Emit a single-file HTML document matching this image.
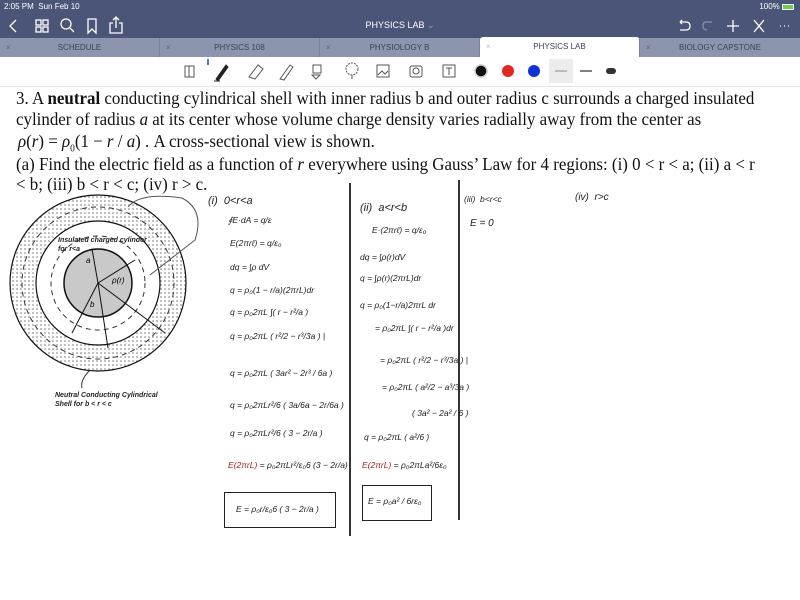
<!DOCTYPE html>
<html><head><meta charset="utf-8"><style>
*{margin:0;padding:0;box-sizing:border-box}
body{width:800px;height:600px;overflow:hidden;background:#fff;font-family:"Liberation Sans",sans-serif;position:relative}
.abs{position:absolute}
.top{background:#4b5578;left:0;top:0;width:800px;height:38px;color:#fff}
.tabs{left:0;top:38px;width:800px;height:19px;background:#8d94ad}
.tab{position:absolute;top:0;height:19px;font-size:8px;color:#3c4358;text-align:center;line-height:19px;border-right:1px solid #7a819a}
.tab .x{position:absolute;left:6px;color:#5a6078}
.tb{left:0;top:57px;width:800px;height:30px;background:#fff;border-bottom:1px solid #e4e4e4}
.q{font-family:"Liberation Serif",serif;font-size:18px;color:#111;white-space:nowrap;transform-origin:0 0;transform:scaleX(0.94)}
.h{font-family:"Liberation Sans",sans-serif;font-style:italic;font-size:8.5px;color:#222;white-space:nowrap}
</style></head><body>
<div class="abs top">
 <div class="abs" style="left:4px;top:2px;font-size:8px">2:05 PM&nbsp; Sun Feb 10</div>
 <div class="abs" style="right:6px;top:2px;font-size:8px">100% <span style="display:inline-block;width:12px;height:6px;background:#6cd04a;border:1px solid #fff;vertical-align:middle"></span></div>
 <svg class="abs" style="left:0;top:14px" width="800" height="24" fill="none" stroke="#fff" stroke-width="1.3">
  <path d="M16 6 L10 12 L16 18"/>
  <rect x="36" y="6" width="5" height="5"/><rect x="43" y="6" width="5" height="5"/><rect x="36" y="13" width="5" height="5"/><rect x="43" y="13" width="5" height="5"/>
  <circle cx="66" cy="10" r="5"/><path d="M70 14 L74 18"/>
  <path d="M88 5 V19 L92 15 L96 19 V5 Z"/>
  <path d="M113 9 H110 V19 H122 V9 H119 M116 14 V3 M113 6 L116 3 L119 6"/>
  <path d="M680 8 H686 Q690 8 690 12 Q690 16 686 16 H680 M680 8 L682 6 M680 8 L682 10"/>
  <path d="M712 8 H706 Q703 8 703 12 Q703 16 707 16" stroke="#8a90a8"/>
  <path d="M733 6 V18 M727 12 H739"/>
  <path d="M754 6 L764 18 M764 6 L754 18"/>
  <path d="M780 12 h1 M784 12 h1 M788 12 h1"/>
 </svg>
 <div class="abs" style="left:0;width:800px;top:20px;text-align:center;font-size:9px">PHYSICS LAB <span style="color:#9aa">⌄</span></div>
</div>
<div class="abs tabs">
 <div class="tab" style="left:0;width:160px"><span class="x">×</span>SCHEDULE</div>
 <div class="tab" style="left:160px;width:160px"><span class="x">×</span>PHYSICS 108</div>
 <div class="tab" style="left:320px;width:160px"><span class="x">×</span>PHYSIOLOGY B</div>
 <div class="tab" style="left:480px;width:160px;background:#fff;top:-1px;height:20px;border-radius:3px 3px 0 0"><span class="x" style="color:#bbb">×</span>PHYSICS LAB</div>
 <div class="tab" style="left:640px;width:160px;border:none"><span class="x">×</span>BIOLOGY CAPSTONE</div>
</div>
<div class="abs tb">
 <svg width="800" height="30" fill="none" stroke="#555" stroke-width="1">
  <rect x="185" y="9" width="9" height="11"/><path d="M189 9 v11"/>
  <path d="M208 2 v6" stroke="#3a7bd5" stroke-width="2"/>
  <path d="M216 22 L226 8 L228 10 L218 24 Z" fill="#222" stroke="#222"/><path d="M214 24 h6" stroke="#222"/>
  <path d="M249 20 L258 8 L263 12 L255 22 Z"/>
  <path d="M280 22 L290 8 L293 10 L284 23 Z"/>
  <path d="M313 8 h8 v8 h-8 z M312 18 l4 4 l4 -4 z"/>
  <circle cx="352" cy="12" r="6" stroke-dasharray="2 1"/><path d="M352 18 v4"/>
  <rect x="377" y="8" width="12" height="12"/><path d="M378 18 l4 -4 l3 3 l3 -3"/>
  <rect x="410" y="9" width="12" height="11" rx="2"/><circle cx="416" cy="14" r="3"/>
  <rect x="443" y="8" width="12" height="12"/><path d="M446 11 h6 M449 11 v7"/>
  <circle cx="481" cy="14" r="6" fill="#111" stroke="#ccc" stroke-width="1.5"/>
  <circle cx="508" cy="14" r="6" fill="#e0281e" stroke="none"/>
  <circle cx="534" cy="14" r="6" fill="#1030d8" stroke="none"/>
  <rect x="549" y="2" width="24" height="24" fill="#ececec" stroke="none"/>
  <path d="M555 14 h12" stroke="#888"/><path d="M580 14 h12" stroke="#555" stroke-width="1.5"/>
  <rect x="606" y="11" width="10" height="6" rx="3" fill="#333" stroke="none"/>
 </svg>
</div>
<div class="abs q" style="left:16px;top:88px">3. A <b>neutral</b> conducting cylindrical shell with inner radius b and outer radius c surrounds a charged insulated</div>
<div class="abs q" style="left:16px;top:109px">cylinder of radius <i>a</i> at its center whose volume charge density varies radially away from the center as</div>
<div class="abs q" style="left:18px;top:131px"><i>ρ</i>(<i>r</i>) = <i>ρ</i><sub style="font-size:10px">0</sub>(1 − <i>r</i> / <i>a</i>) . A cross-sectional view is shown.</div>
<div class="abs q" style="left:16px;top:154px">(a) Find the electric field as a function of <i>r</i> everywhere using Gauss’ Law for 4 regions: (i) 0 &lt; r &lt; a; (ii) a &lt; r</div>
<div class="abs q" style="left:16px;top:174px">&lt; b; (iii) b &lt; r &lt; c; (iv) r &gt; c.</div>
<svg class="abs" style="left:0;top:180px" width="220" height="240">
 <defs><pattern id="d" width="4" height="4" patternUnits="userSpaceOnUse"><rect width="4" height="4" fill="#fff"/><circle cx="1" cy="1" r="0.8" fill="#777"/></pattern></defs>
 <circle cx="98" cy="103" r="88" fill="url(#d)" stroke="#111" stroke-width="1.2"/>
 <circle cx="98" cy="103" r="62" fill="#fff" stroke="#111" stroke-width="1.2"/>
 <circle cx="98" cy="103" r="34" fill="#c9c9c9" stroke="#111" stroke-width="1.5"/>
 <circle cx="98" cy="103" r="47" fill="none" stroke="#333" stroke-dasharray="5 4"/>
 <circle cx="98" cy="103" r="76" fill="none" stroke="#333" stroke-dasharray="5 4"/>
 <g stroke="#111" stroke-width="1"><path d="M98 103 L92 69"/><path d="M98 103 L135 80"/><path d="M98 103 L72 153"/><path d="M98 103 L108 168"/><path d="M98 103 L165 153"/></g>
 <path d="M128 27 Q140 12 182 18 Q205 30 195 60 L150 95" fill="none" stroke="#555"/>
 <path d="M90 190 Q80 200 82 208" fill="none" stroke="#333"/>
 <text x="58" y="62" font-size="7" font-style="italic" font-weight="bold" fill="#222" font-family="Liberation Sans">Insulated charged cylinder</text>
 <text x="58" y="71" font-size="7" font-style="italic" font-weight="bold" fill="#222" font-family="Liberation Sans">for r&lt;a</text>
 <text x="86" y="83" font-size="8" font-style="italic">a</text>
 <text x="112" y="103" font-size="8" font-style="italic">ρ(r)</text>
 <text x="90" y="127" font-size="8" font-style="italic">b</text>
 <text x="55" y="217" font-size="7" font-style="italic" font-weight="bold" fill="#222" font-family="Liberation Sans">Neutral Conducting Cylindrical</text>
 <text x="55" y="226" font-size="7" font-style="italic" font-weight="bold" fill="#222" font-family="Liberation Sans">Shell for b &lt; r &lt; c</text>
</svg>
<div class="abs" style="left:349px;top:183px;width:1.5px;height:353px;background:#333"></div>
<div class="abs" style="left:458px;top:180px;width:1.5px;height:340px;background:#333"></div>
<div class="abs h" style="left:208px;top:195px;font-size:11px">(i)&nbsp; 0&lt;r&lt;a</div>
<div class="abs h" style="left:228px;top:215px">∮E·dA = q/ε</div>
<div class="abs h" style="left:230px;top:238px">E(2πrℓ) = q/ε₀</div>
<div class="abs h" style="left:230px;top:262px">dq = ∫ρ dV</div>
<div class="abs h" style="left:230px;top:285px">q = ρ₀(1 − r/a)(2πrL)dr</div>
<div class="abs h" style="left:230px;top:307px">q = ρ₀2πL ∫( r − r²/a )</div>
<div class="abs h" style="left:230px;top:331px">q = ρ₀2πL ( r²/2 − r³/3a ) |</div>
<div class="abs h" style="left:230px;top:368px">q = ρ₀2πL ( 3ar² − 2r³ / 6a )</div>
<div class="abs h" style="left:230px;top:400px">q = ρ₀2πLr²/6 ( 3a/6a − 2r/6a )</div>
<div class="abs h" style="left:230px;top:428px">q = ρ₀2πLr²/6 ( 3 − 2r/a )</div>
<div class="abs h" style="left:228px;top:460px"><span style="color:#b02020">E(2πrL)</span> = ρ₀2πLr²/ε₀6 (3 − 2r/a)</div>
<div class="abs" style="left:224px;top:492px;width:112px;height:36px;border:1.3px solid #222"></div>
<div class="abs h" style="left:236px;top:504px">E = ρ₀r/ε₀6 ( 3 − 2r/a )</div>
<div class="abs h" style="left:360px;top:202px;font-size:11px">(ii)&nbsp; a&lt;r&lt;b</div>
<div class="abs h" style="left:372px;top:225px">E·(2πrℓ) = q/ε₀</div>
<div class="abs h" style="left:360px;top:252px">dq = ∫ρ(r)dV</div>
<div class="abs h" style="left:360px;top:273px">q = ∫ρ(r)(2πrL)dr</div>
<div class="abs h" style="left:360px;top:300px">q = ρ₀(1−r/a)2πrL dr</div>
<div class="abs h" style="left:375px;top:323px">= ρ₀2πL ∫( r − r²/a )dr</div>
<div class="abs h" style="left:380px;top:355px">= ρ₀2πL ( r²/2 − r³/3a ) |</div>
<div class="abs h" style="left:382px;top:382px">= ρ₀2πL ( a²/2 − a³/3a )</div>
<div class="abs h" style="left:412px;top:408px">( 3a² − 2a² / 6 )</div>
<div class="abs h" style="left:364px;top:432px">q = ρ₀2πL ( a²/6 )</div>
<div class="abs h" style="left:362px;top:460px"><span style="color:#b02020">E(2πrL)</span> = ρ₀2πLa²/6ε₀</div>
<div class="abs" style="left:362px;top:485px;width:70px;height:36px;border:1.3px solid #222"></div>
<div class="abs h" style="left:368px;top:496px">E = ρ₀a² / 6rε₀</div>
<div class="abs h" style="left:464px;top:194px">(iii)&nbsp; b&lt;r&lt;c</div>
<div class="abs h" style="left:470px;top:218px;font-size:10px">E = 0</div>
<div class="abs h" style="left:575px;top:192px;font-size:10px">(iv)&nbsp; r&gt;c</div>
</body></html>
